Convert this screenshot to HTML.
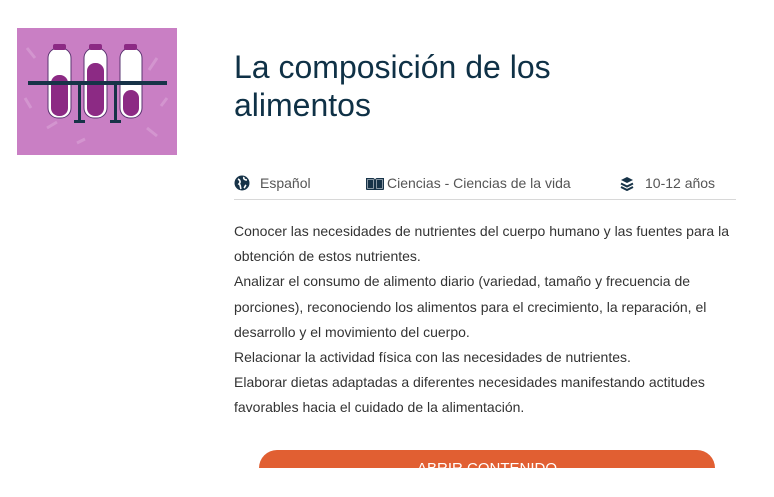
<!DOCTYPE html>
<html><head><style>
body{margin:0;background:#fff;width:774px;height:497px;overflow:hidden;font-family:"Liberation Sans",sans-serif;position:relative}
.img{position:absolute;left:17px;top:28px;width:160px;height:127px;background:#c97fc4;overflow:hidden}
h1{position:absolute;left:234px;top:48px;margin:0;font-weight:400;font-size:32px;line-height:38px;color:#0f3146;width:360px}
.meta{position:absolute;left:234px;top:173px;width:502px;height:26px;border-bottom:1px solid #d8d8d8;font-size:14px;color:#555}
.meta span{position:absolute;top:2px;display:flex;align-items:center;gap:6px}
.desc{position:absolute;left:234px;top:219px;width:500px;font-size:14px;line-height:25.2px;color:#333}
.btn{position:absolute;left:259px;top:450px;width:456px;height:18px;background:#e15f32;border-radius:20px 20px 0 0;overflow:hidden;color:#fff;font-size:15px;text-align:center;line-height:38px}
</style></head><body>
<div class="img"><svg width="160" height="127" viewBox="0 0 160 127">
<g stroke="#dba4d7" stroke-width="3" fill="none" opacity=".6"><path d="M10 20l8 10M30 100l10-6M140 30l-8 12M130 100l10 8M60 115l8-4M150 70l-6 8M8 70l6 10"/></g>
<g stroke="#5a3470" stroke-width="1">
<rect x="31" y="20" width="23" height="70" rx="10" fill="#fff"/><rect x="67" y="20" width="23" height="70" rx="10" fill="#fff"/><rect x="103" y="20" width="22" height="70" rx="10" fill="#fff"/></g>
<g fill="#8c2a84"><rect x="34" y="47" width="17" height="41" rx="8"/><rect x="70" y="35" width="17" height="53" rx="8"/><rect x="106" y="62" width="16" height="26" rx="8"/>
<rect x="36" y="16" width="13" height="6" rx="2"/><rect x="72" y="16" width="13" height="6" rx="2"/><rect x="107" y="16" width="13" height="6" rx="2"/></g>
<rect x="11" y="53" width="139" height="4" fill="#173348"/>
<rect x="61" y="53" width="3" height="41" fill="#173348"/><rect x="97" y="53" width="3" height="41" fill="#173348"/>
<rect x="57" y="92" width="11" height="3" fill="#173348"/><rect x="93" y="92" width="11" height="3" fill="#173348"/>
</svg></div>
<h1>La composición de los alimentos</h1>
<div class="meta">
<span style="left:0"><svg width="16" height="16" viewBox="0 0 16 16"><circle cx="8" cy="8" r="7.5" fill="#173348"/><path d="M4 4c2 1 3 3 1 5 2 1 1 3 2 5M10 2c-1 2 1 3 3 3M12 10c-1 1-1 2-2 3" stroke="#fff" stroke-width="1.6" fill="none"/></svg><span style="position:static;margin-left:4px">Español</span></span>
<span style="left:131px"><svg width="20" height="15" viewBox="0 0 20 15"><path d="M1 2h7c1 0 2 1 2 2v10H2c-.5 0-1-.5-1-1zM19 2h-7c-1 0-2 1-2 2v10h8c.5 0 1-.5 1-1z" fill="#173348"/><path d="M2.5 3.5h6v9h-6zM11.5 3.5h6v9h-6z" fill="#173348" stroke="#fff" stroke-width=".5"/></svg><span style="position:static;margin-left:-4px">Ciencias - Ciencias de la vida</span></span>
<span style="left:386px"><svg width="14" height="15" viewBox="0 0 14 15"><path d="M7 1l6 3-6 3-6-3z" fill="#173348"/><path d="M1 7.5l6 3 6-3M1 11l6 3 6-3" stroke="#173348" stroke-width="2" fill="none"/></svg><span style="position:static;margin-left:5px">10-12 años</span></span>
</div>
<div class="desc">Conocer las necesidades de nutrientes del cuerpo humano y las fuentes para la obtención de estos nutrientes.<br>Analizar el consumo de alimento diario (variedad, tamaño y frecuencia de porciones), reconociendo los alimentos para el crecimiento, la reparación, el desarrollo y el movimiento del cuerpo.<br>Relacionar la actividad física con las necesidades de nutrientes.<br>Elaborar dietas adaptadas a diferentes necesidades manifestando actitudes favorables hacia el cuidado de la alimentación.</div>
<div class="btn">ABRIR CONTENIDO</div>
</body></html>
